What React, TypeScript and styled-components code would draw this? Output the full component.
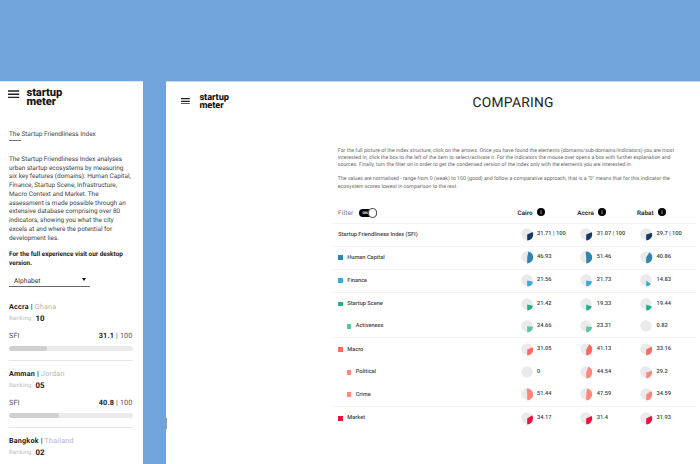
import React from "react";
import styled, { createGlobalStyle } from "styled-components";

const Global = createGlobalStyle`
  * { box-sizing: border-box; }
  html, body { margin: 0; padding: 0; }
  body { background: #70a4db; font-family: Roboto, "Liberation Sans", sans-serif; color: #333; overflow: hidden; text-rendering: geometricPrecision; }
`;

const Stage = styled.div`
  width: 700px;
  height: 464px;
  padding-top: 81px;
  display: flex;
  gap: 23.5px;
  overflow: hidden;
`;

const Phone = styled.aside`
  width: 142.5px;
  flex: none;
  height: 383px;
  padding: 6px 10px 0 9px;
  background: #fff;
  border-top: 1px solid #d5e4f5;
`;

const Desktop = styled.main`
  position: relative;
  width: 534px;
  flex: none;
  height: 383px;
  background: #fff;
  border-top: 1px solid #c3d8f1;
`;

const EdgeHandle = styled.i`
  position: absolute;
  left: 0;
  top: 336px;
  width: 1px;
  height: 11px;
  background: #8a97a8;
`;

const Brand = styled.header<{ $large?: boolean }>`
  display: flex;
  height: 21px;
  gap: ${(p) => (p.$large ? 7 : 9.8)}px;
  margin-left: ${(p) => (p.$large ? -0.7 : 0)}px;
`;

const MenuIcon = styled.svg<{ $w: number; $top: number }>`
  display: block;
  flex: none;
  width: ${(p) => p.$w}px;
  height: ${(p) => (p.$w * 9) / 12}px;
  margin-top: ${(p) => p.$top}px;
`;

const Logo = styled.div<{ $size: number; $line: number; $spacing: number }>`
  margin-top: -0.5px;
  font-size: ${(p) => p.$size}px;
  line-height: ${(p) => p.$line}px;
  letter-spacing: ${(p) => p.$spacing}px;
  font-weight: 800;
  color: #111;
`;

const IndexTitle = styled.h2`
  margin: 20px 0 0;
  font-size: 6.45px;
  line-height: 10px;
  font-weight: 400;
  color: #444;
  white-space: nowrap;
  &::after {
    content: "";
    display: block;
    width: 12px;
    height: 1px;
    margin-top: 1px;
    background: #777;
  }
`;

const Copy = styled.p`
  margin: 13.8px 0 0;
  font-size: 6.42px;
  line-height: 8.75px;
  color: #444;
`;

const Line = styled.span`
  display: block;
  white-space: nowrap;
`;

const Notice = styled(Copy)`
  margin-top: 7.5px;
  font-weight: 700;
  color: #222;
`;

const Select = styled.div`
  display: flex;
  align-items: center;
  justify-content: space-between;
  width: 81px;
  height: 12px;
  margin-top: 7.5px;
  padding: 1.5px 4px 0 5px;
  border-bottom: 1px solid #666;
  font-size: 6.6px;
  letter-spacing: 0.05px;
`;

const Caret = styled.i`
  border: 2.5px solid transparent;
  border-top: 3.5px solid #111;
  border-bottom: 0;
  margin-bottom: 3px;
`;

const CityList = styled.div`
  margin-top: 7.3px;
`;

const City = styled.section`
  height: 67.2px;
  border-bottom: 1px solid #e8e8e8;
  padding-top: 7px;
`;

const CityName = styled.div`
  height: 11.2px;
  font-size: 7.2px;
  line-height: 11px;
  letter-spacing: 0.2px;
  color: #b4b4b4;
  b { color: #222; }
`;

const Rank = styled.div`
  display: flex;
  align-items: center;
  gap: 4px;
  height: 12px;
  font-size: 6px;
  letter-spacing: 0.15px;
  color: #bbb;
  b { font-size: 7.8px; color: #111; letter-spacing: 0.1px; }
`;

const Score = styled.div`
  display: flex;
  justify-content: space-between;
  margin-top: 6px;
  font-size: 7.3px;
  line-height: 12px;
  color: #555;
  letter-spacing: 0.1px;
  b { color: #222; letter-spacing: 0.2px; }
`;

const Track = styled.div`
  height: 4.5px;
  margin-top: 4px;
  border-radius: 3px;
  background: #eaeaea;
  overflow: hidden;
`;

const Fill = styled.div`
  height: 100%;
  border-radius: 3px;
  background: #d0d0d0;
`;

const TopBar = styled.div`
  display: grid;
  grid-template-columns: 291.8px auto;
  padding: 12.5px 0 0 14.8px;
  height: 62px;
`;

const PageTitle = styled.h1`
  margin: 0.5px 0 0;
  font-size: 13.8px;
  line-height: 16px;
  letter-spacing: 0.25px;
  font-weight: 400;
  color: #222;
`;

const Intro = styled.div`
  height: 59.2px;
  padding: 3.9px 0 0 171.8px;
`;

const IntroText = styled.p`
  margin: 0 0 6.8px;
  font-size: 5.24px;
  line-height: 7.2px;
  color: #666;
`;

const Table = styled.div`
  width: 364px;
  margin-left: 165.5px;
`;

const Row = styled.div<{ $h: number; $rule?: boolean }>`
  display: grid;
  grid-template-columns: 182.5px 59.7px 59.7px 1fr;
  align-items: center;
  height: ${(p) => p.$h}px;
  padding-left: 6px;
  border-bottom: ${(p) => (p.$rule ? "1px solid #f3f3f3" : "0")};
`;

const Label = styled.div<{ $child?: boolean }>`
  display: flex;
  align-items: center;
  gap: 4.2px;
  padding-left: ${(p) => (p.$child ? 9.2 : 0.8)}px;
  font-size: 5.65px;
  font-weight: 500;
  color: #444;
  white-space: nowrap;
`;

const Swatch = styled.i<{ $c: string }>`
  width: 4.8px;
  height: 4.8px;
  background: ${(p) => p.$c};
`;

const Filter = styled.div`
  display: flex;
  align-items: center;
  gap: 6px;
  padding-left: 0.6px;
  font-size: 6.6px;
  letter-spacing: 0.1px;
  color: #777;
`;

const Toggle = styled.div`
  display: flex;
  align-items: center;
  justify-content: space-between;
  width: 18px;
  height: 8.5px;
  padding-left: 3px;
  border-radius: 5px;
  background: #000;
  color: #fff;
  font-size: 3.7px;
  font-weight: 700;
  &::after {
    content: "";
    width: 8px;
    height: 8px;
    border: 1px solid #555;
    border-radius: 50%;
    background: #fff;
  }
`;

const ColumnHead = styled.div`
  display: flex;
  align-items: center;
  gap: 4.5px;
  margin-left: -2.5px;
  font-size: 6.3px;
  font-weight: 700;
  letter-spacing: 0.05px;
  color: #333;
`;

const Info = styled.svg`
  width: 8px;
  height: 8px;
  margin-top: -1px;
`;

const Cell = styled.div`
  display: flex;
  align-items: center;
  gap: 4.5px;
  padding-left: 0.5px;
  margin-top: -0.5px;
  font-size: 5.7px;
  font-weight: 500;
  letter-spacing: 0.02px;
  color: #444;
  white-space: nowrap;
`;

const PieBox = styled.svg`
  width: 12px;
  height: 12px;
  flex: none;
  overflow: visible;
`;

function Pie({ value, color }: { value: number; color: string }) {
  const a = (value / 100) * Math.PI * 2;
  const x = 6.2 + 6 * Math.sin(a);
  const y = 6.4 + 6 * Math.cos(a);
  return (
    <PieBox viewBox="0 0 12 12">
      <circle cx="6" cy="6" r="5.8" fill="#eaeaea" />
      {value > 1 && <path d={`M6.2 6.4v6A6 6 0 ${value > 50 ? 1 : 0} 0 ${x} ${y}Z`} fill={color} />}
    </PieBox>
  );
}

function Menu({ w, top }: { w: number; top: number }) {
  return (
    <MenuIcon $w={w} $top={top} viewBox="0 0 12 9">
      <path d="M0 1h12M0 4.5h12M0 8h12" stroke="#222" strokeWidth="1.7" />
    </MenuIcon>
  );
}

const about = [
  "The Startup Friendliness Index analyses",
  "urban startup ecosystems by measuring",
  "six key features (domains): Human Capital,",
  "Finance, Startup Scene, Infrastructure,",
  "Macro Context and Market. The",
  "assessment is made possible through an",
  "extensive database comprising over 80",
  "indicators, showing you what the city",
  "excels at and where the potential for",
  "development lies.",
];

const cities = [
  { name: "Accra", country: "Ghana", rank: "10", sfi: 31.1 },
  { name: "Amman", country: "Jordan", rank: "05", sfi: 40.8 },
  { name: "Bangkok", country: "Thailand", rank: "02" },
];

const intro = [
  [
    "For the full picture of the index structure, click on the arrows. Once you have found the elements (domains/sub-domains/indicators) you are most",
    "interested in, click the box to the left of the item to select/activate it. For the indicators the mouse over opens a box with further explanation and",
    "sources. Finally, turn the filter on in order to get the condensed version of the index only with the elements you are interested in.",
  ],
  [
    "The values are normalised - range from 0 (weak) to 100 (good) and follow a comparative approach, that is a \"0\" means that for this indicator the",
    "ecosystem scores lowest in comparison to the rest.",
  ],
];

interface Metric {
  name: string;
  color: string;
  values: string[];
  height: number;
  child?: boolean;
  rule?: boolean;
  total?: boolean;
}

const metrics: Metric[] = [
  { name: "Startup Friendliness Index (SFI)", color: "#173966", values: ["31.71", "31.07", "29.7"], height: 23, rule: true, total: true },
  { name: "Human Capital", color: "#2e86b0", values: ["46.93", "51.46", "40.86"], height: 23, rule: true },
  { name: "Finance", color: "#39a9dc", values: ["21.56", "21.73", "14.83"], height: 23, rule: true },
  { name: "Startup Scene", color: "#22b08a", values: ["21.42", "19.33", "19.44"], height: 22.7 },
  { name: "Activeness", color: "#5cc5a7", values: ["24.66", "23.31", "0.82"], height: 22.8, child: true, rule: true },
  { name: "Macro", color: "#ff6b60", values: ["31.05", "41.13", "33.16"], height: 22.8 },
  { name: "Political", color: "#ff887d", values: ["0", "44.54", "29.2"], height: 22.8, child: true },
  { name: "Crime", color: "#ff887d", values: ["51.44", "47.59", "34.59"], height: 22.9, child: true, rule: true },
  { name: "Market", color: "#e9133f", values: ["34.17", "31.4", "31.93"], height: 23 },
];

export default function App() {
  return (
    <>
      <Global />
      <Stage>
        <Phone>
          <Brand $large>
            <Menu w={11.2} top={2} />
            <Logo $size={11.2} $line={9} $spacing={-0.1}>startup<br />meter</Logo>
          </Brand>
          <IndexTitle>The Startup Friendliness Index</IndexTitle>
          <Copy>{about.map((t) => <Line key={t}>{t}</Line>)}</Copy>
          <Notice><Line>For the full experience visit our desktop</Line><Line>version.</Line></Notice>
          <Select>Alphabet<Caret /></Select>
          <CityList>
            {cities.map((c) => (
              <City key={c.name}>
                <CityName><b>{c.name} |</b> {c.country}</CityName>
                <Rank>Ranking <b>{c.rank}</b></Rank>
                {c.sfi && (
                  <>
                    <Score><span>SFI</span><span><b>{c.sfi}</b> | 100</span></Score>
                    <Track><Fill style={{ width: `${c.sfi}%` }} /></Track>
                  </>
                )}
              </City>
            ))}
          </CityList>
        </Phone>
        <Desktop>
          <TopBar>
            <Brand>
              <Menu w={8.8} top={3} />
              <Logo $size={9.2} $line={7.5} $spacing={-0.05}>startup<br />meter</Logo>
            </Brand>
            <PageTitle>COMPARING</PageTitle>
          </TopBar>
          <Intro>
            {intro.map((p, i) => (
              <IntroText key={i}>{p.map((t) => <Line key={t}>{t}</Line>)}</IntroText>
            ))}
          </Intro>
          <Table>
            <Row $h={20.5} $rule>
              <Filter>Filter<Toggle>ON</Toggle></Filter>
              {["Cairo", "Accra", "Rabat"].map((n) => (
                <ColumnHead key={n}>
                  {n}
                  <Info viewBox="0 0 8 8"><circle cx="4" cy="4" r="4" fill="#000" /><path d="M4 3.4V6M4 2v.8" stroke="#ccc" strokeWidth=".8" /></Info>
                </ColumnHead>
              ))}
            </Row>
            {metrics.map((m) => (
              <Row key={m.name} $h={m.height} $rule={m.rule}>
                <Label $child={m.child}>{!m.total && <Swatch $c={m.color} />}{m.name}</Label>
                {m.values.map((v, i) => (
                  <Cell key={i}><Pie value={Number(v)} color={m.color} />{v}{m.total && " | 100"}</Cell>
                ))}
              </Row>
            ))}
          </Table>
          <EdgeHandle />
        </Desktop>
      </Stage>
    </>
  );
}
